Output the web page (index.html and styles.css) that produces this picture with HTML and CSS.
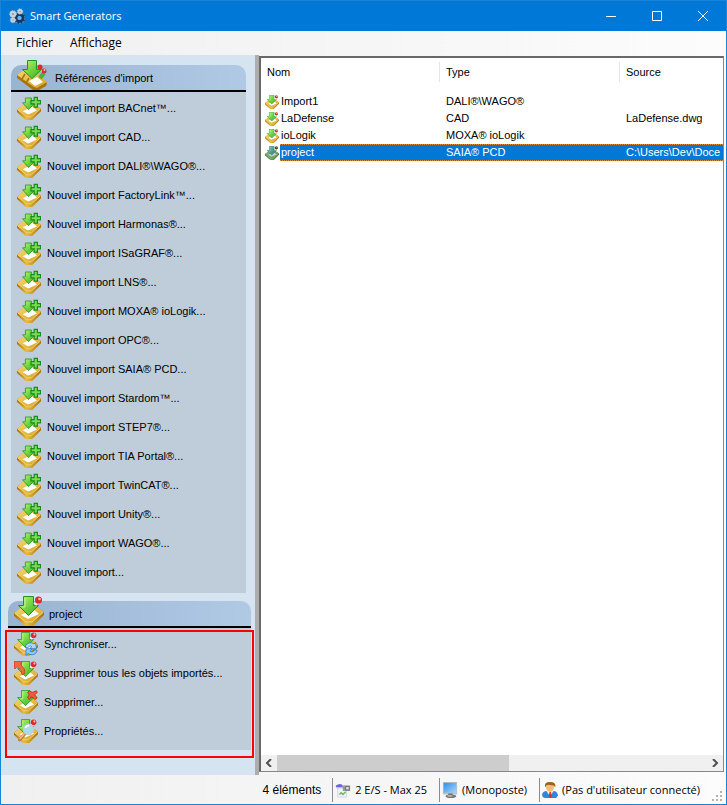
FILE: index.html
```html
<!DOCTYPE html>
<html lang="fr">
<head>
<meta charset="utf-8">
<title>Smart Generators</title>
<link rel="stylesheet" href="styles.css">
</head>
<body>
<svg class="defs" aria-hidden="true">
  <defs>
    <linearGradient id="green" x1="0" y1="0" x2="1" y2="1"><stop offset="0" stop-color="#c6f57e"/><stop offset=".5" stop-color="#6fd540"/><stop offset="1" stop-color="#36ad2c"/></linearGradient>
    <linearGradient id="gold" x1="0" y1="0" x2="1" y2="1"><stop offset="0" stop-color="#f3d678"/><stop offset=".5" stop-color="#e6bb45"/><stop offset="1" stop-color="#d6a32a"/></linearGradient>
    <linearGradient id="side" x1="0" y1="0" x2="1" y2="0"><stop offset="0" stop-color="#a8700c"/><stop offset=".4" stop-color="#e8bc3c"/><stop offset="1" stop-color="#a8700c"/></linearGradient>
    <linearGradient id="screen" x1="0" y1="0" x2="1" y2="1"><stop offset="0" stop-color="#2f8fe8"/><stop offset="1" stop-color="#a6d8fb"/></linearGradient>
    <symbol id="tray" viewBox="0 0 30 30">
      <path d="M0 17 8 11 23 11 30 16 30 19 19 30 11 30 0 20Z" fill="url(#side)"/>
      <path d="M0 17 8 11 23 11 30 16 18 26 12 26Z" fill="url(#gold)"/>
      <path d="M1 17.500 12 26 18 26 29 16.500" fill="none" stroke="#f8e290" stroke-width=".8"/>
      <path d="M7 19 19 13 25 18 14 23Z" fill="#fff"/>
    </symbol>
    <symbol id="arrow" viewBox="0 0 30 30"><path d="M9.500.5H19.500V9.500H24.500L14.500 19.500 4.500 9.500H9.500Z" fill="url(#green)" stroke="#249326"/><path d="M11 2V11H8" fill="none" stroke="#d6fba8" stroke-opacity=".8"/></symbol>
    <symbol id="ball" viewBox="0 0 30 30"><circle cx="24.500" cy="4" r="3.500" fill="#d92c2c"/><circle cx="25.500" cy="3" r="1.300" fill="#fbb"/><path d="m20 7 3 2" stroke="#eee" stroke-width="2"/></symbol>
    <symbol id="import" viewBox="0 0 30 30"><use href="#tray"/><use href="#arrow"/><use href="#ball"/></symbol>
    <symbol id="import-new" viewBox="0 0 30 30"><use href="#tray"/><path d="M10.500 2.500H18V8.500H22.500L14.500 17 7 8.500H10.500Z" fill="url(#green)" stroke="#249326"/><path d="M21.500 1.800h4v4h4v4h-4v4h-4v-4h-4v-4h4Z" fill="#7bdc50" stroke="#188b1e" stroke-width="1.500"/></symbol>
    <symbol id="references" viewBox="0 0 30 30">
      <path d="M0 15 5 11 15 10 30 23 29 26 20 31 16 30 0 18Z" fill="#a87410"/>
      <path d="M0 15 5 11 16 9 30 22 20 28 17 27Z" fill="url(#gold)"/>
      <path d="m5 19 3-5m1 9 3-5" stroke="#a87410" stroke-width="1.500"/>
      <path d="M12 21 20 17 26 22 18 26Z" fill="#fff"/>
      <path d="M23 18 27 13" stroke="#42b631" stroke-width="4"/>
      <path d="m24 10 2 2" stroke="#fff" stroke-width="2"/>
      <circle cx="23" cy="7" r="2.500" fill="#d92c2c"/><circle cx="27" cy="11" r="2.500" fill="#d92c2c"/><circle cx="27.500" cy="10" r="1" fill="#fbb"/>
      <path d="M10.500.5H19.500V9.500H24.500L15 18.500 5.500 9.500H10.500Z" fill="url(#green)" stroke="#249326"/>
    </symbol>
    <symbol id="sync" viewBox="0 0 30 30"><use href="#import"/>
      <path d="M14 19c1-5 7-7 11-4l2-2 1 8h-8l2-3c-2-1-4 0-5 2Z" fill="#a7dcfa" stroke="#2874c9"/>
      <path d="M29 23c-1 5-7 7-11 4l-3 2v-8h8l-3 3c2 1 5 1 6-2Z" fill="#8bcaf6" stroke="#2874c9"/></symbol>
    <symbol id="purge" viewBox="0 0 30 30"><use href="#import"/><path d="M0 0 10 1 8 4 13 10 13 16 10 17 9 12 4 7 1 10Z" fill="#f46a3e" stroke="#cc3820"/></symbol>
    <symbol id="delete" viewBox="0 0 30 30"><use href="#tray"/><use href="#arrow"/><path d="m19 1 4 2 5-2 1 2-3 3 3 4-3 2-4-4-3 4-2-3 2-3-2-3Z" fill="#f05a35" stroke="#b82718"/></symbol>
    <symbol id="inspect" viewBox="0 0 30 30"><use href="#import"/><path d="m14 18-7 8" stroke="#c97842" stroke-width="4" stroke-linecap="round"/><path d="m13 18-6 7" stroke="#f5bd8c" stroke-width="2"/><circle cx="18" cy="13" r="6.500" fill="#a9dbed" stroke="#bfccd2" stroke-width="1.500"/><path d="M14 11q2-3 5-3" fill="none" stroke="#fff" stroke-width="2"/></symbol>
  </defs>
</svg>

<div class="window">
  <header class="titlebar">
    <svg class="app-icon" viewBox="0 0 16 16" aria-hidden="true">
      <circle cx="10.500" cy="10" r="4" fill="none" stroke="#17385c" stroke-width="3.500"/>
      <circle cx="10.500" cy="10" r="5.500" fill="none" stroke="#3d83bc" stroke-width="1.500" stroke-dasharray="2 1.500"/>
      <circle cx="10.500" cy="10" r="2" fill="#68b7ee"/>
      <g fill="none" stroke="#c9d2da"><circle cx="4" cy="6" r="2" stroke-width="2.500"/><circle cx="4" cy="6" r="3.300" stroke-dasharray="1.300 1"/><circle cx="11" cy="3.500" r="1.500" stroke-width="2"/><circle cx="11" cy="3.500" r="2.700" stroke-dasharray="1.200 1"/><circle cx="4" cy="12" r="1.500" stroke-width="2"/><circle cx="4" cy="12" r="2.700" stroke-dasharray="1.200 1"/></g>
    </svg>
    <h1>Smart Generators</h1>
    <button type="button" aria-label="Réduire"><svg viewBox="0 0 10 10"><path d="M0 5.500h10"/></svg></button>
    <button type="button" aria-label="Agrandir"><svg viewBox="0 0 10 10"><path d="M.5.5h9v9h-9z"/></svg></button>
    <button type="button" aria-label="Fermer"><svg viewBox="0 0 10 10"><path d="m0 0 10 10M10 0 0 10"/></svg></button>
  </header>

  <nav class="menubar">
    <button type="button">Fichier</button>
    <button type="button">Affichage</button>
  </nav>

  <main class="workspace">
    <aside class="sidebar">
      <section class="panel">
        <h2><svg><use href="#references"/></svg>Références d'import</h2>
        <ul>
          <li><button type="button"><svg><use href="#import-new"/></svg>Nouvel import BACnet™...</button></li>
          <li><button type="button"><svg><use href="#import-new"/></svg>Nouvel import CAD...</button></li>
          <li><button type="button"><svg><use href="#import-new"/></svg>Nouvel import DALI®\WAGO®...</button></li>
          <li><button type="button"><svg><use href="#import-new"/></svg>Nouvel import FactoryLink™...</button></li>
          <li><button type="button"><svg><use href="#import-new"/></svg>Nouvel import Harmonas®...</button></li>
          <li><button type="button"><svg><use href="#import-new"/></svg>Nouvel import ISaGRAF®...</button></li>
          <li><button type="button"><svg><use href="#import-new"/></svg>Nouvel import LNS®...</button></li>
          <li><button type="button"><svg><use href="#import-new"/></svg>Nouvel import MOXA® ioLogik...</button></li>
          <li><button type="button"><svg><use href="#import-new"/></svg>Nouvel import OPC®...</button></li>
          <li><button type="button"><svg><use href="#import-new"/></svg>Nouvel import SAIA® PCD...</button></li>
          <li><button type="button"><svg><use href="#import-new"/></svg>Nouvel import Stardom™...</button></li>
          <li><button type="button"><svg><use href="#import-new"/></svg>Nouvel import STEP7®...</button></li>
          <li><button type="button"><svg><use href="#import-new"/></svg>Nouvel import TIA Portal®...</button></li>
          <li><button type="button"><svg><use href="#import-new"/></svg>Nouvel import TwinCAT®...</button></li>
          <li><button type="button"><svg><use href="#import-new"/></svg>Nouvel import Unity®...</button></li>
          <li><button type="button"><svg><use href="#import-new"/></svg>Nouvel import WAGO®...</button></li>
          <li><button type="button"><svg><use href="#import-new"/></svg>Nouvel import...</button></li>
        </ul>
      </section>
      <section class="panel panel-project">
        <h2><svg><use href="#import"/></svg>project</h2>
        <ul>
          <li><button type="button"><svg><use href="#sync"/></svg>Synchroniser...</button></li>
          <li><button type="button"><svg><use href="#purge"/></svg>Supprimer tous les objets importés...</button></li>
          <li><button type="button"><svg><use href="#delete"/></svg>Supprimer...</button></li>
          <li><button type="button"><svg><use href="#inspect"/></svg>Propriétés...</button></li>
        </ul>
        <div class="highlight"></div>
      </section>
    </aside>

    <div class="splitter"></div>

    <section class="listview">
      <div class="table-area">
        <table>
          <colgroup><col class="col-name"><col class="col-type"><col class="col-source"></colgroup>
          <thead><tr><th scope="col">Nom</th><th scope="col">Type</th><th scope="col">Source</th></tr></thead>
          <tbody>
            <tr><td><div class="name"><svg><use href="#import"/></svg><span>Import1</span></div></td><td>DALI®\WAGO®</td><td></td></tr>
            <tr><td><div class="name"><svg><use href="#import"/></svg><span>LaDefense</span></div></td><td>CAD</td><td>LaDefense.dwg</td></tr>
            <tr><td><div class="name"><svg><use href="#import"/></svg><span>ioLogik</span></div></td><td>MOXA® ioLogik</td><td></td></tr>
            <tr class="selected"><td><div class="name"><svg><use href="#import"/></svg><span>project</span></div></td><td>SAIA® PCD</td><td>C:\Users\Dev\Doce</td></tr>
          </tbody>
        </table>
      </div>
      <div class="scrollbar">
        <button type="button" aria-label="Défiler à gauche"><svg viewBox="0 0 8 8"><path d="M6 0 2 4l4 4"/></svg></button>
        <div class="track"><div class="thumb"></div></div>
        <button type="button" aria-label="Défiler à droite"><svg viewBox="0 0 8 8"><path d="m2 0 4 4-4 4"/></svg></button>
      </div>
    </section>
  </main>

  <footer class="statusbar">
    <span class="count">4 éléments</span>
    <span class="cell"><svg viewBox="0 0 18 18" aria-hidden="true"><path d="M3 4h10v13H3z" fill="#eef1f8" stroke="#d3d6e3"/><path d="M1 4q4-3 7-1l1 3H1z" fill="#6b63e8"/><path d="m2 7 6-1" stroke="#b9b5fa"/><path d="M8 4h9v6H9z" fill="#9a9a9a"/><path d="M12 5h4v4h-4z" fill="#ddd" stroke="#666"/><path d="m5 14 2-2 2 2 3-3" fill="none" stroke="#6cb65c" stroke-width="1.500"/></svg>2 E/S - Max 25</span>
    <span class="cell"><svg viewBox="0 0 18 18" aria-hidden="true"><path d="M1 0h16v14H1z" fill="#b9bfc6"/><path d="M2 1h14v11H2z" fill="url(#screen)"/><path d="M7 13h5v3H7z" fill="#666"/><ellipse cx="10" cy="16" rx="6" ry="2" fill="#777"/><ellipse cx="9" cy="15.500" rx="3" ry="1" fill="#bbb"/></svg>(Monoposte)</span>
    <span class="cell"><svg viewBox="0 0 18 18" aria-hidden="true"><path d="M0 14q1-4 5-4h8q4 0 5 5l-2 3H3q-3-1-3-4Z" fill="#2d86e0"/><path d="m5 10 4 6 4-6z" fill="#f4f7fb"/><path d="m8.500 11h1.500l1 5-1.500 2-2-2z" fill="#d9342b"/><ellipse cx="9" cy="6" rx="4.500" ry="5" fill="#f5bd75"/><path d="M3.500 6Q2 0 9 0q7 0 6 6l-2-2-6-1-2 1z" fill="#9b6415"/></svg>(Pas d'utilisateur connecté)</span>
    <svg class="grip" viewBox="0 0 10 10" aria-hidden="true"><path d="M8 0h2v2H8zM4 4h2v2H4zM8 4h2v2H8zM0 8h2v2H0zM4 8h2v2H4zM8 8h2v2H8z" fill="#b3b3b3"/></svg>
  </footer>
</div>
</body>
</html>
```
FILE: styles.css
```css
* { box-sizing: border-box; }

body {
  margin: 0;
  font: 11px/16px "Liberation Sans", Arial, sans-serif;
  color: #000;
}

button {
  padding: 0;
  border: 0;
  background: none;
  font: inherit;
  color: inherit;
}

svg { flex: none; }

.defs {
  position: absolute;
  width: 0;
  height: 0;
}

.window {
  display: flex;
  flex-direction: column;
  min-height: 100vh;
  border: 1px solid #1883d7;
  background: linear-gradient(90deg, #f0f0f0, #fcfcfc);
}

.titlebar {
  display: flex;
  align-items: center;
  height: 30px;
  padding-left: 8px;
  background: #0078d7;
  color: #fff;
}

.app-icon {
  width: 16px;
  height: 16px;
}

.titlebar h1 {
  flex: 1;
  margin: 0 0 0 5px;
  font: 11px/16px "Open Sans", "Noto Sans", sans-serif;
}

.titlebar button {
  display: grid;
  place-items: center;
  width: 46px;
  height: 30px;
}

.titlebar button svg {
  width: 10px;
  height: 10px;
  fill: none;
  stroke: #fff;
}

.menubar {
  display: flex;
  gap: 17px;
  height: 24px;
  padding-left: 15px;
  font: 12px/24px "Open Sans", "Noto Sans", sans-serif;
}

.workspace {
  display: flex;
  flex: 1;
}

.sidebar {
  flex: none;
  width: 254px;
  padding: 10px 4px 0 7px;
  background: #d6e4f2;
}

.panel {
  position: relative;
  margin: 0 5px 8px 3px;
}

.panel-project { margin: 0; }

.panel h2 {
  display: flex;
  align-items: center;
  gap: 8px;
  height: 27px;
  margin: 0;
  padding-left: 6px;
  border-bottom: 2px solid #000;
  border-radius: 10px 10px 0 0;
  background: linear-gradient(90deg, #99b4d1, #b0cae6);
  font-size: 11px;
  font-weight: normal;
}

.panel-project h2 { gap: 5px; }

.panel h2 svg {
  width: 30px;
  height: 30px;
  margin-top: -5px;
}

.panel ul {
  margin: 0;
  padding: 1px 0 7px;
  background: #bfccd9;
  list-style: none;
}

.panel-project ul { padding-bottom: 5px; }

.panel li button {
  display: flex;
  align-items: center;
  gap: 6px;
  width: 100%;
  height: 29px;
  padding-left: 6px;
  text-align: left;
}

.panel li svg {
  width: 24px;
  height: 24px;
}

.highlight {
  position: absolute;
  inset: 29px -3px -8px;
  border: 2px solid #f00;
  pointer-events: none;
}

.splitter {
  flex: none;
  width: 4px;
  background: #adadad;
}

.listview {
  display: flex;
  flex: 1;
  flex-direction: column;
  min-width: 0;
  margin: 1px 2px 3px 0;
  border: 1px solid #828790;
  border-top: 2px solid #696969;
  border-left: 2px solid #696969;
  background: #fff;
}

.table-area {
  flex: 1;
  overflow: hidden;
}

table {
  width: 100%;
  table-layout: fixed;
  border-collapse: collapse;
}

.col-name { width: 179px; }
.col-type { width: 180px; }

th,
td {
  padding: 0 0 0 6px;
  overflow: hidden;
  font-weight: normal;
  text-align: left;
  white-space: nowrap;
}

th {
  height: 35px;
  padding-bottom: 8px;
  background: linear-gradient(#e5e5e5, #e5e5e5) right 4px / 1px 20px no-repeat;
}

th:last-child { background: none; }

td {
  height: 17px;
  line-height: 17px;
  vertical-align: top;
}

td:first-child { padding-left: 4px; }

.name {
  display: flex;
  align-items: center;
  height: 17px;
}

.name svg {
  width: 14px;
  height: 14px;
}

.name span {
  flex: 1;
  margin-left: 1px;
  padding-left: 1px;
}

.selected { color: #fff; }

.selected td,
.selected .name span {
  background: repeating-linear-gradient(90deg, #e08a3c 0 1px, #0078d7 1px 2px) top / 100% 1px no-repeat,
    repeating-linear-gradient(90deg, #e08a3c 0 1px, #0078d7 1px 2px) bottom / 100% 1px no-repeat,
    #0078d7;
}

.selected td:first-child { background: none; }

.selected svg { filter: hue-rotate(60deg) saturate(0.6) brightness(0.8); }

.scrollbar {
  display: flex;
  height: 16px;
  background: #f0f0f0;
}

.scrollbar button {
  display: grid;
  place-items: center;
  width: 16px;
}

.scrollbar button svg {
  width: 8px;
  height: 8px;
  fill: none;
  stroke: #505050;
  stroke-width: 2;
}

.track { flex: 1; }

.thumb {
  width: 54%;
  height: 100%;
  background: #cdcdcd;
}

.statusbar {
  display: flex;
  align-items: center;
  justify-content: flex-end;
  height: 29px;
  font: 11px/16px "Open Sans", "Noto Sans", sans-serif;
}

.count {
  margin-right: 11px;
  font: 12px/16px "Liberation Sans", Arial, sans-serif;
}

.cell {
  display: flex;
  align-items: center;
  gap: 4px;
  height: 24px;
  padding: 0 12px 0 2px;
  border-left: 1px solid #8c8c8c;
  white-space: nowrap;
}

.cell svg {
  width: 16px;
  height: 18px;
}

.grip {
  align-self: flex-end;
  width: 10px;
  height: 10px;
  margin: 0 4px 3px 0;
}
```
